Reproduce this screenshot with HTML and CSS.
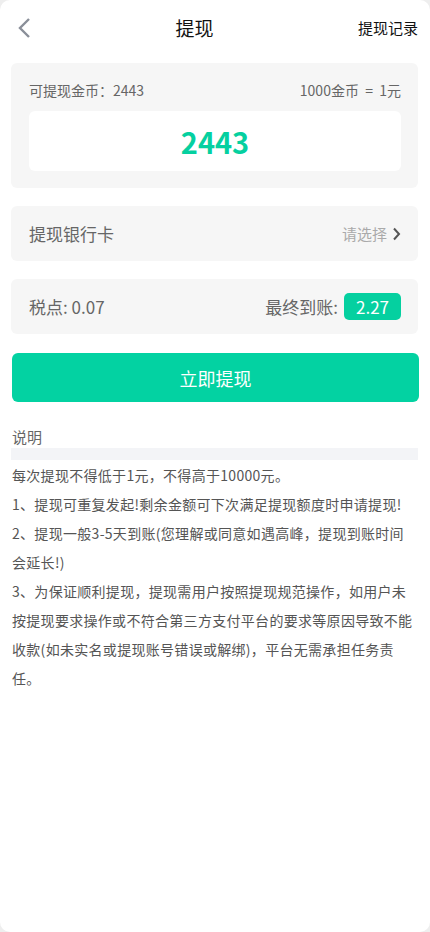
FILE: index.html
```html
<!DOCTYPE html>
<html lang="zh-CN">
<head>
  <meta charset="UTF-8">
  <title>提现</title>
  <link rel="stylesheet" href="styles.css">
</head>
<body>
<div class="page">
  <header class="topbar">
    <a class="back" href="#">
      <svg width="14" height="22" viewBox="0 0 14 22"><path d="M12 2 L3 11 L12 20" fill="none" stroke="#8a8f99" stroke-width="2.4"/></svg>
    </a>
    <h1 class="title">提现</h1>
    <a class="record" href="#">提现记录</a>
  </header>

  <section class="card coins">
    <div class="coins-row">
      <span>可提现金币：2443</span>
      <span>1000金币 &nbsp;= &nbsp;1元</span>
    </div>
    <div class="amount">2443</div>
  </section>

  <section class="card row">
    <span class="label">提现银行卡</span>
    <span class="pick">请选择
      <svg width="9" height="14" viewBox="0 0 9 14"><path d="M2 1.5 L7 7 L2 12.5" fill="none" stroke="#555" stroke-width="2"/></svg>
    </span>
  </section>

  <section class="card row">
    <span class="label">税点: 0.07</span>
    <span class="final">最终到账: <span class="badge">2.27</span></span>
  </section>

  <button class="submit">立即提现</button>

  <div class="notes">
    <div class="notes-title">说明</div>
    <div class="notes-bar"></div>
    <p>每次提现不得低于1元，不得高于10000元。</p>
    <p>1、提现可重复发起!剩余金额可下次满足提现额度时申请提现!</p>
    <p>2、提现一般3-5天到账(您理解或同意如遇高峰，提现到账时间会延长!)</p>
    <p>3、为保证顺利提现，提现需用户按照提现规范操作，如用户未按提现要求操作或不符合第三方支付平台的要求等原因导致不能收款(如未实名或提现账号错误或解绑)，平台无需承担任务责任。</p>
  </div>
</div>
</body>
</html>
```

FILE: styles.css
```css
html {
  background-color: #eeeeee;
}

body {
  margin: 0;
  font-family: "Noto Sans CJK SC", "Noto Sans", sans-serif;
  color: #666;
}

.page {
  background-color: #fff;
  border-radius: 10px;
  min-height: 932px;
  padding: 0 12px 0 11px;
  box-sizing: border-box;
}

/* header */
.topbar {
  height: 55px;
  display: flex;
  align-items: center;
}

.back {
  display: flex;
  padding-left: 6px;
  width: 14px;
}

.title {
  flex: 1;
  text-align: center;
  margin: 0;
  font-size: 19px;
  font-weight: normal;
  color: #111;
}

.record {
  font-size: 15px;
  color: #111;
  text-decoration: none;
  margin-right: -12px;
  padding-right: 12px;
}

/* cards */
.card {
  background-color: #f6f6f6;
  border-radius: 6px;
  margin-top: 8px;
}

.coins {
  padding: 14px 17px 17px 18px;
}

.coins-row {
  display: flex;
  justify-content: space-between;
  font-size: 14px;
  line-height: 26px;
  color: #666;
}

.amount {
  margin-top: 8px;
  height: 60px;
  background-color: #fff;
  border-radius: 6px;
  display: flex;
  align-items: center;
  justify-content: center;
  font-size: 29px;
  font-weight: bold;
  color: #05d0a0;
}

.row {
  margin-top: 18px;
  height: 55px;
  padding: 0 17px 0 18px;
  display: flex;
  align-items: center;
  justify-content: space-between;
  font-size: 17px;
}

.pick {
  font-size: 15px;
  color: #aaa;
  display: flex;
  align-items: center;
  gap: 5px;
}

.final {
  display: flex;
  align-items: center;
  gap: 6px;
}

.badge {
  background-color: #05d0a0;
  color: #fff;
  border-radius: 5px;
  width: 57px;
  height: 27px;
  display: inline-flex;
  align-items: center;
  justify-content: center;
}

.submit {
  display: block;
  width: 100%;
  margin-top: 19px;
  margin-left: 1px;
  height: 49px;
  border: none;
  border-radius: 6px;
  background-color: #03d2a2;
  color: #fff;
  font-family: inherit;
  font-size: 18px;
}

/* notes */
.notes {
  margin-top: 24px;
  padding-left: 1px;
}

.notes-title {
  font-size: 15px;
  line-height: 22px;
  color: #666;
}

.notes-bar {
  height: 12px;
  background-color: #f3f4f7;
  margin-left: -1px;
}

.notes p {
  margin: 0;
  font-size: 14px;
  letter-spacing: 0.3px;
  line-height: 29px;
  color: #555;
  padding-top: 1px;
}

.notes p + p {
  padding-top: 0;
}
```
